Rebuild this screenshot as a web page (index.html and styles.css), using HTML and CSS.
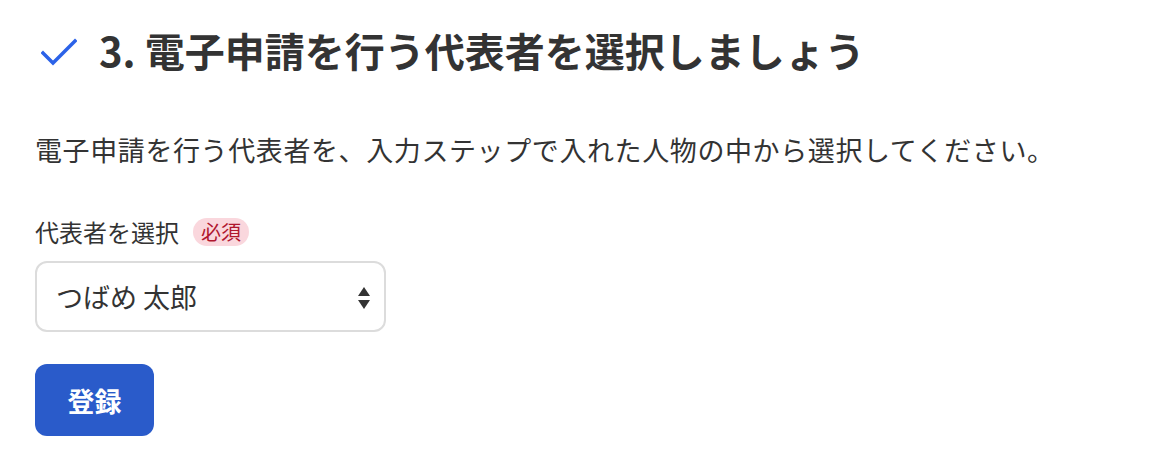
FILE: index.html
```html
<!DOCTYPE html>
<html lang="ja">
<head>
  <meta charset="UTF-8" />
  <meta name="viewport" content="width=device-width, initial-scale=1.0"/>
  <title>代表者の選択</title>
  <link rel="stylesheet" href="styles.css">
</head>
<body>
  <div class="step">
    <h2 class="stepTitle">
      <svg class="checkIcon" width="36" height="28" viewBox="0 0 36 28">
        <path d="M2 15 L12 25 L34 3" fill="none" stroke="#2b62e8" stroke-width="3.4" stroke-linecap="square"/>
      </svg>
      <span>3. 電子申請を行う代表者を選択しましょう</span>
    </h2>

    <p class="lead">電子申請を行う代表者を、入力ステップで入れた人物の中から選択してください。</p>

    <div class="field">
      <label class="fieldLabel">代表者を選択 <span class="badge">必須</span></label>
      <div class="selectBox">
        <span>つばめ 太郎</span>
        <svg class="arrows" width="12" height="22" viewBox="0 0 12 22">
          <path d="M6 0 L12 9 L0 9 Z" fill="#333"/>
          <path d="M0 13 L12 13 L6 22 Z" fill="#333"/>
        </svg>
      </div>
    </div>

    <button class="button">登録</button>
  </div>
</body>
</html>
```

FILE: styles.css
```css
* {
  margin: 0;
  padding: 0;
  box-sizing: border-box;
}

body {
  background: #fff;
  color: #333;
  font-family: "Noto Sans CJK JP", "Noto Sans", sans-serif;
}

.step {
  display: flex;
  flex-direction: column;
  align-items: flex-start;
  padding: 22px 35px;
}

.stepTitle {
  display: flex;
  align-items: center;
  gap: 22px;
  font-size: 40px;
  font-weight: bold;
  line-height: 56px;
  padding-left: 6px;
  color: #333;
}

.checkIcon {
  margin-top: 4px;
}

.lead {
  margin-top: 52px;
  font-size: 27px;
  letter-spacing: 0.6px;
  line-height: 40px;
}

.field {
  margin-top: 45px;
  display: flex;
  flex-direction: column;
}

.fieldLabel {
  display: flex;
  align-items: center;
  gap: 14px;
  font-size: 24px;
  line-height: 34px;
}

.badge {
  background: #fad7dd;
  color: #b0162e;
  font-size: 20px;
  line-height: 28px;
  padding: 0 8px;
  border-radius: 14px;
}

.selectBox {
  margin-top: 12px;
  width: 351px;
  height: 71px;
  border: 2px solid #dcdcdc;
  border-radius: 12px;
  display: flex;
  align-items: center;
  justify-content: space-between;
  padding: 0 14px 0 19px;
  font-size: 27px;
}

.arrows {
  margin-top: 2px;
}

.button {
  margin-top: 32px;
  width: 119px;
  height: 72px;
  border: none;
  border-radius: 12px;
  background: #2a5bca;
  color: #fff;
  font-family: inherit;
  font-size: 27px;
  font-weight: bold;
}
```
